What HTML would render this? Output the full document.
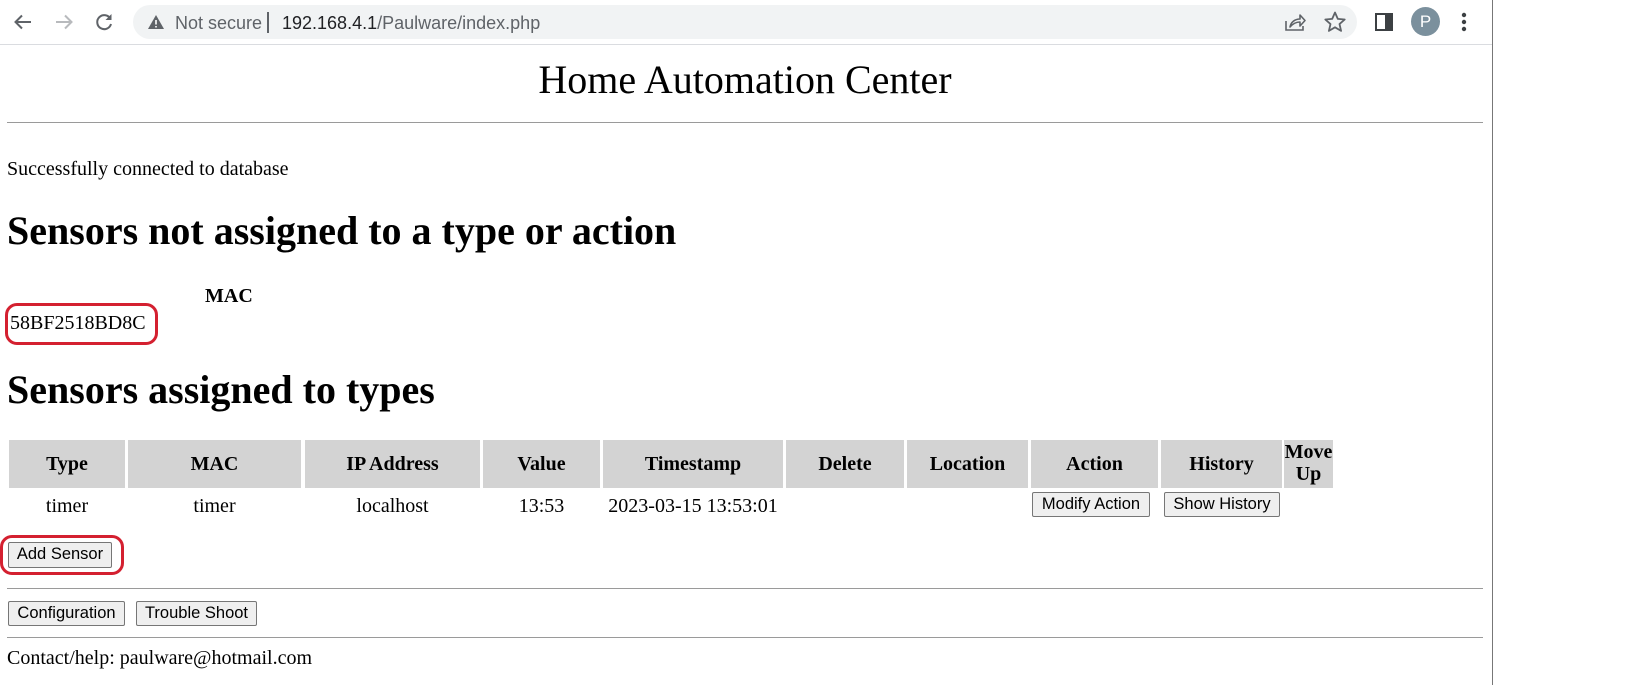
<!DOCTYPE html>
<html><head><meta charset="utf-8"><style>
html,body{margin:0;padding:0;background:#fff;overflow:hidden;width:1625px;height:685px}
#w{position:absolute;left:0;top:0;width:1625px;height:685px;font-family:"Liberation Serif",serif;color:#000}
.a{position:absolute;white-space:nowrap;line-height:1}
.btn{position:absolute;box-sizing:border-box;background:#efefef;border:1px solid #767676;border-radius:2px;font:16.5px "Liberation Sans",sans-serif;text-align:center;line-height:23px;color:#000;white-space:nowrap}
.th{position:absolute;top:440px;height:48px;background:#d3d3d3;font-weight:bold;font-size:20px;display:flex;align-items:center;justify-content:center;text-align:center;line-height:22px}
.td{position:absolute;top:496px;font-size:20px;text-align:center;line-height:1}
.hr{position:absolute;left:7px;width:1476px;height:1px;background:#9a9a9a}
.red{position:absolute;border:3px solid #d42030;border-radius:12px;box-sizing:border-box}
</style></head><body><div id="w">
<!-- toolbar -->
<div class="a" style="left:0;top:44px;width:1492px;height:1px;background:#dadce0"></div>
<div class="a" style="left:1492px;top:0;width:1px;height:685px;background:#777"></div>
<svg class="a" style="left:12px;top:11px" width="22" height="22" viewBox="0 0 22 22"><path d="M19 11H4M10 4.5L3.5 11 10 17.5" stroke="#5f6368" stroke-width="2" fill="none"/></svg>
<svg class="a" style="left:53px;top:11px" width="22" height="22" viewBox="0 0 22 22"><path d="M3 11h15M12 4.5l6.5 6.5-6.5 6.5" stroke="#b8babd" stroke-width="2" fill="none"/></svg>
<svg class="a" style="left:93px;top:11px" width="22" height="22" viewBox="0 0 22 22"><path d="M17.5 8A7 7 0 1 0 18 13" stroke="#5f6368" stroke-width="2" fill="none"/><path d="M18.5 3v6h-6z" fill="#5f6368"/></svg>
<div class="a" style="left:133px;top:5px;width:1224px;height:34px;border-radius:17px;background:#f1f3f4"></div>
<svg class="a" style="left:147px;top:14px" width="18" height="16" viewBox="0 0 18 16"><path d="M9 1L17 15H1z" fill="#5f6368"/><path d="M9 6v4.5M9 12v1.5" stroke="#fff" stroke-width="1.6"/></svg>
<div class="a" style="left:175px;top:13px;font:18px 'Liberation Sans',sans-serif;color:#5f6368">Not secure</div>
<div class="a" style="left:267px;top:12px;width:1.5px;height:21px;background:#5f6368"></div>
<div class="a" style="left:282px;top:13px;font:18px 'Liberation Sans',sans-serif;color:#202124">192.168.4.1<span style="color:#5f6368">/Paulware/index.php</span></div>
<svg class="a" style="left:1283px;top:11px" width="24" height="22" viewBox="0 0 24 22"><path d="M3 10v9h17v-4" stroke="#5f6368" stroke-width="1.6" fill="none"/><path d="M7 16c1-5 5-8 10-8V4l5 5.5-5 5.5v-4c-4 0-7 1.5-10 5z" stroke="#5f6368" stroke-width="1.6" fill="none" stroke-linejoin="round"/></svg>
<svg class="a" style="left:1323px;top:10px" width="24" height="24" viewBox="0 0 24 24"><path d="M12 2.5l2.8 6.4 6.9.6-5.2 4.6 1.6 6.8L12 17.3l-6.1 3.6 1.6-6.8-5.2-4.6 6.9-.6z" stroke="#5f6368" stroke-width="1.8" fill="none" stroke-linejoin="round"/></svg>
<svg class="a" style="left:1375px;top:13px" width="18" height="18" viewBox="0 0 18 18"><rect x="1" y="1" width="16" height="16" fill="none" stroke="#3c4043" stroke-width="2"/><rect x="10" y="1" width="7" height="16" fill="#3c4043"/></svg>
<div class="a" style="left:1411px;top:7px;width:29px;height:29px;border-radius:50%;background:#7b909d;color:#fff;font:17px 'Liberation Sans',sans-serif;text-align:center;line-height:29px">P</div>
<svg class="a" style="left:1458px;top:11px" width="12" height="22" viewBox="0 0 12 22"><circle cx="6" cy="4" r="2.2" fill="#3c4043"/><circle cx="6" cy="11" r="2.2" fill="#3c4043"/><circle cx="6" cy="18" r="2.2" fill="#3c4043"/></svg>

<!-- content -->
<div class="a" style="left:0;width:1490px;top:60px;text-align:center;font-size:40px">Home Automation Center</div>
<div class="hr" style="top:122px"></div>
<div class="a" style="left:7px;top:159px;font-size:20px">Successfully connected to database</div>
<div class="a" style="left:7px;top:211px;font-size:40px;font-weight:bold">Sensors not assigned to a type or action</div>
<div class="a" style="left:205px;top:286px;font-size:20px;font-weight:bold">MAC</div>
<div class="a" style="left:10px;top:313px;font-size:20px">58BF2518BD8C</div>
<div class="red" style="left:5px;top:303px;width:153px;height:42px"></div>
<div class="a" style="left:7px;top:370px;font-size:40px;font-weight:bold">Sensors assigned to types</div>

<div class="th" style="left:9px;width:116px">Type</div>
<div class="th" style="left:128px;width:173px">MAC</div>
<div class="th" style="left:305px;width:175px">IP Address</div>
<div class="th" style="left:483px;width:117px">Value</div>
<div class="th" style="left:603px;width:180px">Timestamp</div>
<div class="th" style="left:786px;width:118px">Delete</div>
<div class="th" style="left:907px;width:121px">Location</div>
<div class="th" style="left:1031px;width:127px">Action</div>
<div class="th" style="left:1161px;width:121px">History</div>
<div class="th" style="left:1284px;width:49px;align-items:flex-start;padding-top:1px;box-sizing:border-box">Move<br>Up</div>

<div class="td" style="left:9px;width:116px">timer</div>
<div class="td" style="left:128px;width:173px">timer</div>
<div class="td" style="left:305px;width:175px">localhost</div>
<div class="td" style="left:483px;width:117px">13:53</div>
<div class="td" style="left:603px;width:180px">2023-03-15 13:53:01</div>
<div class="btn" style="left:1032px;top:492px;width:118px;height:25px">Modify Action</div>
<div class="btn" style="left:1164px;top:492px;width:116px;height:25px">Show History</div>

<div class="btn" style="left:8px;top:542px;width:104px;height:26px">Add Sensor</div>
<div class="red" style="left:0;top:535px;width:124px;height:40px"></div>
<div class="hr" style="top:588px"></div>
<div class="btn" style="left:8px;top:601px;width:117px;height:25px">Configuration</div>
<div class="btn" style="left:136px;top:601px;width:121px;height:25px">Trouble Shoot</div>
<div class="hr" style="top:637px"></div>
<div class="a" style="left:7px;top:648px;font-size:20px">Contact/help: paulware@hotmail.com</div>
</div></body></html>
